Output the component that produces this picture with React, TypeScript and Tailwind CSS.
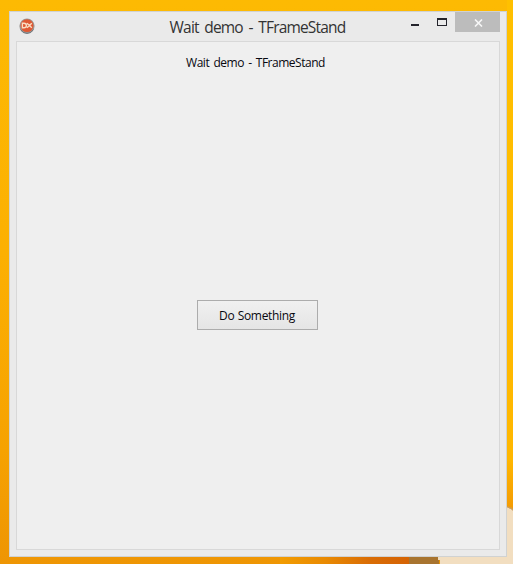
function Wallpaper() {
  return (
    <svg className="absolute inset-0" width="513" height="564" viewBox="0 0 513 564" aria-hidden="true">
      <defs>
        <linearGradient id="sky" x1="0" y1="0" x2="0" y2="1">
          <stop offset="0" stopColor="#fdba03" />
          <stop offset="0.45" stopColor="#fcb002" />
          <stop offset="0.8" stopColor="#f6a201" />
          <stop offset="1" stopColor="#ee9503" />
        </linearGradient>
        <linearGradient id="edge" x1="0" y1="0" x2="0" y2="1">
          <stop offset="0" stopColor="#ffc000" />
          <stop offset="0.9" stopColor="#ffb700" />
          <stop offset="1" stopColor="#f39a04" />
        </linearGradient>
        <linearGradient id="petal" x1="0" y1="0" x2="1" y2="0">
          <stop offset="0" stopColor="#f29c01" />
          <stop offset="0.35" stopColor="#e98a02" />
          <stop offset="0.7" stopColor="#d96c05" />
          <stop offset="1" stopColor="#d56304" />
        </linearGradient>
      </defs>
      <rect width="513" height="564" fill="url(#sky)" />
      <rect x="507" width="6" height="510" fill="url(#edge)" />
      <rect x="280" y="556" width="129" height="8" fill="url(#petal)" />
      <rect x="409" y="556" width="30" height="8" fill="#a8742f" />
      <path d="M438 556H507V507L513 510V564H440V560H438Z" fill="#f2dec0" />
      <path d="M507 507H509V508H512V510H513" fill="none" stroke="#c99d63" />
    </svg>
  );
}

function AppIcon() {
  return (
    <svg width="16" height="16" viewBox="0 0 16 16" aria-hidden="true">
      <circle cx="8" cy="8" r="7.6" fill="#9a9693" />
      <path d="M1.5 11.5A7.3 7.3 0 0 0 14.5 11.5" fill="none" stroke="#71777c" />
      <circle cx="8" cy="7.6" r="6.4" fill="#df5934" />
      <path
        d="M3.4 5.2V9.8H5Q7.4 9.7 7.4 7.5Q7.4 5.3 5 5.2ZM8 5.2L12.8 9.8M12.8 5.2L8 9.8"
        fill="none"
        stroke="#f8ddc4"
        strokeWidth="1.4"
      />
    </svg>
  );
}

function TitleBar() {
  return (
    <header className="relative flex h-[29px] shrink-0 justify-between">
      <div className="pt-[6px] pl-[9px]">
        <AppIcon />
      </div>
      <h1 className="absolute inset-x-0 top-[5px] pr-px text-center text-[15.5px] leading-5 tracking-[-0.82px] [word-spacing:2.4px] whitespace-nowrap text-[#333]">
        Wait demo - TFrameStand
      </h1>
      <div className="mr-[6px] flex h-5">
        <button aria-label="Minimize" className="mr-[18px] flex items-start pt-3">
          <span className="block h-[2px] w-2 bg-[#24242c]" />
        </button>
        <button aria-label="Maximize" className="mr-2 flex items-start pt-[6px]">
          <span className="block h-2 w-[10px] border border-t-2 border-[#24242c]" />
        </button>
        <button aria-label="Close" className="flex w-[45px] items-start justify-center bg-[#bcbcbc] pt-[7px] pl-px">
          <svg width="9" height="8" viewBox="0 0 9 8" aria-hidden="true">
            <path d="M1 .5L8 7.5M8 .5L1 7.5" stroke="#f7f7f7" strokeWidth="1.6" />
          </svg>
        </button>
      </div>
    </header>
  );
}

export default function App() {
  return (
    <div className="relative h-[564px] w-[513px] overflow-hidden pt-[11px] pl-[9px] font-['Open_Sans','Noto_Sans',sans-serif]">
      <Wallpaper />
      <section className="relative flex h-[546px] w-[498px] flex-col border border-[#d0d2d2] bg-[#eaeaea]">
        <TitleBar />
        <main className="mx-[6px] mb-[6px] flex flex-1 flex-col items-center border border-[#d8d8d8] bg-[#efefef] pr-[2px]">
          <p className="mt-[12px] mr-[3px] h-[18px] text-[12px] leading-[18px] tracking-[-0.48px] [word-spacing:1.6px] whitespace-nowrap text-[#080810]">
            Wait demo - TFrameStand
          </p>
          <button className="mt-[228px] h-[30px] w-[121px] border border-[#acacac] bg-linear-to-b from-[#f0f0f0] to-[#e5e5e5] pt-px text-[12px] leading-[27px] tracking-[-0.32px] [word-spacing:0.6px] text-[#080810]">
            Do Something
          </button>
        </main>
      </section>
    </div>
  );
}
